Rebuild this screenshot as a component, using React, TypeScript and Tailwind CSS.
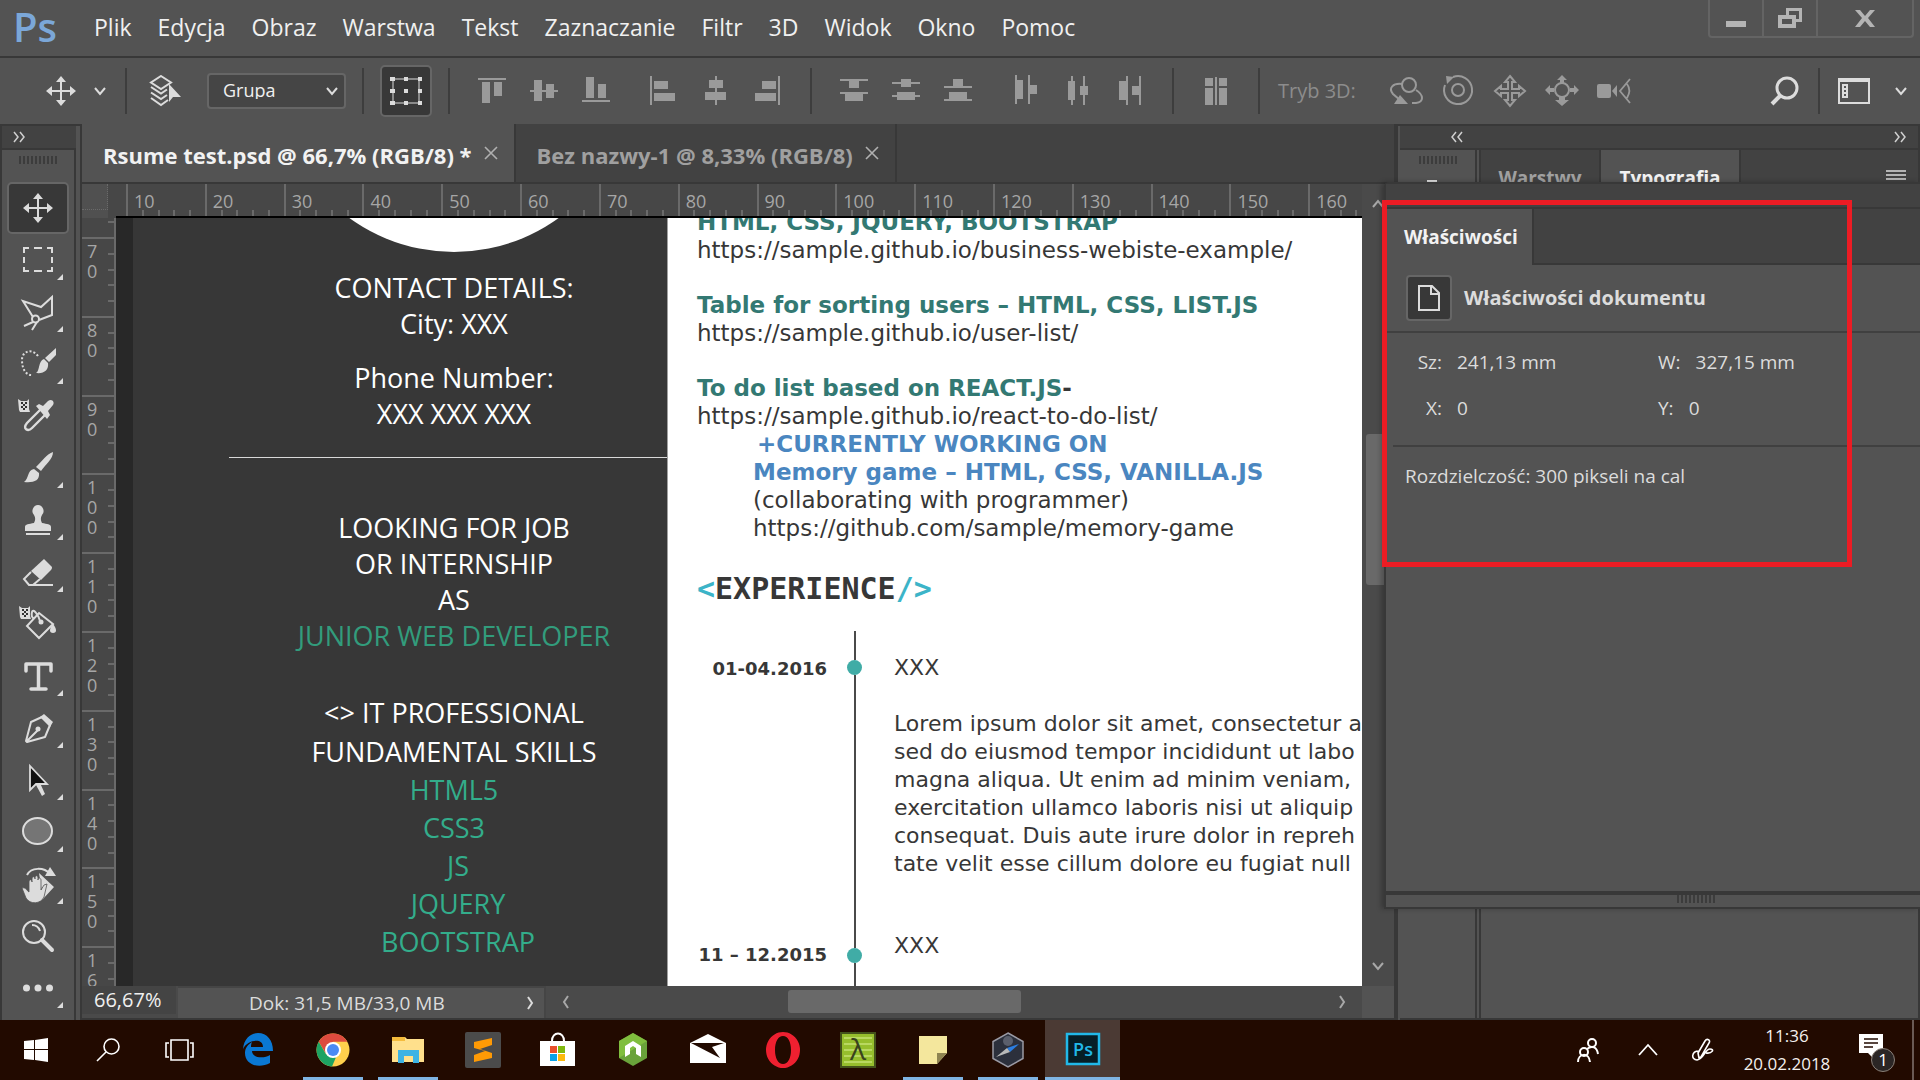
import type { ReactNode } from "react";
import clsx from "clsx";

const menuItems = ["Plik", "Edycja", "Obraz", "Warstwa", "Tekst", "Zaznaczanie", "Filtr", "3D", "Widok", "Okno", "Pomoc"];
const rulerX = [10, 20, 30, 40, 50, 60, 70, 80, 90, 100, 110, 120, 130, 140, 150, 160];
const rulerY = [70, 80, 90, 100, 110, 120, 130, 140, 150, 160];

const loremLines = [
  "Lorem ipsum dolor sit amet, consectetur a",
  "sed do eiusmod tempor incididunt ut labo",
  "magna aliqua. Ut enim ad minim veniam,",
  "exercitation ullamco laboris nisi ut aliquip",
  "consequat. Duis aute irure dolor in repreh",
  "tate velit esse cillum dolore eu fugiat null",
];

function Svg({ children, className, size = 32 }: { children: ReactNode; className?: string; size?: number }) {
  return (
    <svg width={size} height={size} viewBox={`0 0 ${size} ${size}`} className={clsx("shrink-0", className)} fill="currentColor" aria-hidden="true">
      {children}
    </svg>
  );
}

function Chevron({ d, className }: { d: "up" | "down" | "left" | "right"; className?: string }) {
  const paths = { up: "M3 11l5-6 5 6", down: "M3 5l5 6 5-6", left: "M10 2L6 8l4 6", right: "M6 2l4 6-4 6" };
  return (
    <svg width="16" height="16" viewBox="0 0 16 16" className={className} fill="none" stroke="currentColor" strokeWidth="2" aria-hidden="true">
      <path d={paths[d]} />
    </svg>
  );
}

function DoubleChevron({ left = false }: { left?: boolean }) {
  return (
    <svg width="14" height="12" viewBox="0 0 14 12" fill="none" stroke="#d0d0d0" strokeWidth="1.5" aria-hidden="true">
      <path d={left ? "M6 1L2 6l4 5M12 1L8 6l4 5" : "M2 1l4 5-4 5M8 1l4 5-4 5"} />
    </svg>
  );
}

function Grip() {
  return (
    <span className="flex h-2 w-[38px] justify-between">
      {Array.from({ length: 10 }, (_, i) => (
        <span key={i} className="w-[2px] bg-[#3c3c3c]" />
      ))}
    </span>
  );
}

function Divider() {
  return <span className="h-[46px] w-[2px] shrink-0 bg-[#3d3d3d]" />;
}

const moveIcon = (
  <path d="M16 1l5 6h-4v8h8v-4l6 5-6 5v-4h-8v8h4l-5 6-5-6h4v-8H7v4l-6-5 6-5v4h8V7h-4z" />
);

const checker = (
  <>
    <path d="M-1 1l3 2h6l2-2v10l1 3H1l-1-2z" fill="#dcdcdc" />
    <path d="M2 4h2v2H2zM6 4h2v2H6zM4 6h2v2H4zM2 8h2v2H2zM6 8h2v2H6zM4 10h2v2H4z" fill="#333" />
  </>
);

const alignGroups: { label: string; icon: ReactNode }[][] = [
  [
    { label: "Wyrównaj górne krawędzie", icon: <path d="M2 3h28v2H2zM6 7h8v21H6zM18 7h8v14h-8z" /> },
    { label: "Wyrównaj środki w pionie", icon: <path d="M2 15h28v2H2zM6 5h8v21H6zM18 9h8v14h-8z" /> },
    { label: "Wyrównaj dolne krawędzie", icon: <path d="M2 25h28v2H2zM6 2h8v21H6zM18 9h8v14h-8z" /> },
  ],
  [
    { label: "Wyrównaj lewe krawędzie", icon: <path d="M2 1h2v29H2zM6 6h14v8H6zM6 18h21v8H6z" /> },
    { label: "Wyrównaj środki w poziomie", icon: <path d="M15 1h2v29h-2zM9 5h14v8H9zM5 17h21v8H5z" /> },
    { label: "Wyrównaj prawe krawędzie", icon: <path d="M26 1h2v29h-2zM10 6h14v8H10zM3 18h21v8H3z" /> },
  ],
  [
    { label: "Rozłóż górne krawędzie", icon: <path d="M2 4h28v2H2zM11 6h10v7H11zM2 17h28v2H2zM7 19h18v7H7z" /> },
    { label: "Rozłóż środki w pionie", icon: <path d="M2 7h28v2H2zM11 4h10v8H11zM2 20h28v2H2zM7 17h18v8H7z" /> },
    { label: "Rozłóż dolne krawędzie", icon: <path d="M2 11h28v2H2zM11 4h10v7H11zM2 24h28v2H2zM7 17h18v7H7z" /> },
  ],
  [
    { label: "Rozłóż lewe krawędzie", icon: <path d="M5 0h2v29H5zM7 5h6v19H7zM18 0h2v29h-2zM20 10h7v9h-7z" /> },
    { label: "Rozłóż środki w poziomie", icon: <path d="M9 1h2v29H9zM6 6h7v19H6zM21 1h2v29h-2zM18 11h8v9h-8z" /> },
    { label: "Rozłóż prawe krawędzie", icon: <path d="M12 1h2v29h-2zM5 6h7v19H5zM25 1h2v29h-2zM18 11h7v9h-7z" /> },
  ],
];

const modes3d: { label: string; icon: ReactNode }[] = [
  {
    label: "Obrót 3D",
    icon: (
      <>
        <g fill="none" stroke="currentColor" strokeWidth="2"><circle cx="19" cy="10" r="7" /><path d="M12 9C3 8-2 13 3 19l7 6M26 15c8 5 8 12 0 13h-4" /></g>
        <path d="M10 20l8 9H4z" />
      </>
    ),
  },
  {
    label: "Obróć kamerę",
    icon: (
      <>
        <g fill="none" stroke="currentColor" strokeWidth="2"><circle cx="16" cy="15" r="6" /><path d="M11 2a14 14 0 1 1-8 8" /></g>
        <path d="M4 1l8 1-7 7z" />
      </>
    ),
  },
  {
    label: "Przeciągnij",
    icon: <path d="M16 1l5 6h-3v7h7v-3l6 5-6 5v-3h-7v7h3l-5 6-5-6h3v-7H7v3l-6-5 6-5v3h7V7h-3z" fill="none" stroke="currentColor" strokeWidth="2" />,
  },
  {
    label: "Przesuń",
    icon: (
      <>
        <circle cx="16" cy="15" r="7" fill="none" stroke="currentColor" strokeWidth="2" />
        <path d="M16 0l5 5h-3v3h-4V5h-3zM16 31l-7-6h4v-3h6v3h4zM-1 15l5-5v3h4v4H4v3zM33 15l-5-5v3h-4v4h4v3z" />
      </>
    ),
  },
  {
    label: "Powiększ kamerę",
    icon: (
      <>
        <rect x="-1" y="9" width="14" height="14" rx="2" />
        <path d="M14 16l5-6v12z" />
        <path d="M32 4L22 16l10 12M29 9c3 4 3 9 0 14" fill="none" stroke="currentColor" strokeWidth="1.8" />
      </>
    ),
  },
];

const tools: { label: string; icon: ReactNode; more?: boolean; active?: boolean }[] = [
  { label: "Przesunięcie", active: true, icon: moveIcon },
  { label: "Zaznaczanie prostokątne", more: true, icon: <path d="M1 3h6v2H3v4H1zM12 3h8v2h-8zM25 3h6v6h-2V5h-4zM1 13h2v6H1zM29 13h2v6h-2zM1 23h2v3h4v2H1zM12 26h8v2h-8zM29 23h2v5h-6v-2h4z" /> },
  {
    label: "Lasso wielokątne",
    more: true,
    icon: (
      <g fill="none" stroke="currentColor" strokeWidth="2"><path d="M11 21L1 5l18 6L30 1v18l-13 5M11 26l-9 4M15 26l-5 8" /><circle cx="13.5" cy="23" r="3.5" /></g>
    ),
  },
  {
    label: "Szybkie zaznaczanie",
    more: true,
    icon: (
      <>
        <path d="M16 8C10 0 0 3 0 12s4 16 11 15" fill="none" stroke="currentColor" strokeWidth="2" strokeDasharray="2 2" />
        <path d="M34 0v7l-7 7-4-4zM22 11l4 4c1 7-4 11-12 10 4-2 2-12 8-14z" />
      </>
    ),
  },
  {
    label: "Kroplomierz",
    icon: (
      <>
        <g transform="translate(-3 -2)">{checker}</g>
        <path d="M19 9L5 23c-5 6 1 9 5 5l14-14" fill="none" stroke="currentColor" strokeWidth="2.4" />
        <path d="M14 6l3-2 4 2 5-5c4-3 7 1 5 4l-5 6 2 4-3 4z" />
      </>
    ),
  },
  { label: "Pędzel", more: true, icon: <path d="M31 0c0 7-7 12-12 19l-5-4C20 9 25 2 31 0zM12 17l5 4c1 8-6 10-15 9 5-3 3-12 10-13z" /> },
  { label: "Stempel", more: true, icon: <path d="M16 1a6 6 0 0 1 4 10c-2 3-1 6 0 8 5 1 9 1 9 4v4H3v-4c0-3 4-3 9-4 1-2 2-5 0-8a6 6 0 0 1 4-10zM4 29h24v2H4z" /> },
  {
    label: "Gumka",
    more: true,
    icon: (
      <>
        <path d="M22 3l8 8c0 2-1 3-2 4l-9 9-10-9z" />
        <path d="M9 16l-7 7 5 6h4l7-6M7 29h24" fill="none" stroke="currentColor" strokeWidth="2" />
      </>
    ),
  },
  {
    label: "Wiadro z farbą",
    icon: (
      <>
        <g transform="translate(-2 -3)">{checker}</g>
        <path d="M17 5l14 11-14 14L5 18zM18 13c-2-7-7-13-8-9s0 5 2 7" fill="none" stroke="currentColor" strokeWidth="2" />
        <circle cx="19" cy="14" r="2.5" />
        <path d="M31 16c4 5 4 9 0 9s-4-4 0-9z" />
      </>
    ),
  },
  { label: "Tekst poziomy", more: true, icon: <path d="M4 11V4h25v7M16.5 4v25M9 29h15" fill="none" stroke="currentColor" strokeWidth="3.5" strokeLinecap="round" strokeLinejoin="round" /> },
  {
    label: "Pióro",
    more: true,
    icon: (
      <>
        <path d="M20 5L9 10 4 29l1 1 18-5 5-12zM5 29l11-11" fill="none" stroke="currentColor" strokeWidth="2" strokeLinejoin="round" />
        <circle cx="16" cy="17" r="2.5" />
        <path d="M22 2l9 8-3 5L18 5z" />
      </>
    ),
  },
  {
    label: "Zaznaczanie ścieżek",
    more: true,
    icon: (
      <>
        <path d="M8 2v24l6-6h11z" fill="#111" stroke="currentColor" strokeWidth="1.8" />
        <path d="M14 21l4-2 5 11-3 2z" />
      </>
    ),
  },
  { label: "Elipsa", more: true, icon: <ellipse cx="15.5" cy="15" rx="14.5" ry="13" fill="#757575" stroke="currentColor" strokeWidth="2" /> },
  {
    label: "Obracanie widoku",
    more: true,
    icon: (
      <>
        <path d="M5 7c4-8 17-8 23-1" fill="none" stroke="currentColor" strokeWidth="2" />
        <path d="M28-1l6 9H23zM17 5l15 14-11 12z" />
        <path d="M0 20c4-1 5 3 7 4V14c0-3 3-3 3 0v-3c0-3 3-3 3 0v-1c0-3 3-3 3 0v2c0-3 3-2 3 0v10l3-5 3-1-3 13c-3 7-14 8-18 1z" stroke="#535353" strokeWidth=".8" />
      </>
    ),
  },
  {
    label: "Powiększenie",
    icon: (
      <>
        <g fill="none" stroke="currentColor" strokeWidth="2"><circle cx="12" cy="12" r="11" /><path d="M10 5c5 0 7 3 8 6" /></g>
        <path d="M20 20l10 10" stroke="currentColor" strokeWidth="4" strokeLinecap="round" />
      </>
    ),
  },
  { label: "Edytuj pasek narzędzi", more: true, icon: <><circle cx="4.5" cy="16" r="3.5" /><circle cx="16" cy="16" r="3.5" /><circle cx="27.5" cy="16" r="3.5" /></> },
];

function TopMenu() {
  return (
    <header className="flex h-[58px] shrink-0 items-start border-b-2 border-[#383838]">
      <span className="w-20 pl-[13px] text-[40px] leading-[54px] font-semibold text-[#7ba7d8]">Ps</span>
      <nav className="flex gap-[26px] pl-[14px] text-[23px] leading-[54px] text-[#f0f0f0]">
        {menuItems.map((item) => (
          <button key={item} type="button">{item}</button>
        ))}
      </nav>
      <div className="mr-[6px] ml-auto flex h-[38px] rounded-b border-2 border-t-0 border-[#646464] text-[#b4b4b4]">
        <button type="button" aria-label="Minimalizuj" className="flex w-[54px] items-center justify-center border-r-2 border-[#646464]">
          <span className="mt-[12px] h-[6px] w-5 bg-current" />
        </button>
        <button type="button" aria-label="Przywróć" className="flex w-[54px] items-center justify-center border-r-2 border-[#646464]">
          <Svg size={24}><path d="M8 2h16v14h-6v6H0V9h8zM11 5v4h7v4h3V5zM4 13v5h10v-5z" fillRule="evenodd" /></Svg>
        </button>
        <button type="button" aria-label="Zamknij" className="flex w-[94px] items-center justify-center">
          <Svg size={20}><path d="M0 2h5l5 6 5-6h5l-7 8 7 9h-5l-5-6-5 6H0l7-9z" /></Svg>
        </button>
      </div>
    </header>
  );
}

function IconGroup({ items }: { items: { label: string; icon: ReactNode }[] }) {
  return (
    <div className="flex text-[#9a9a9a]">
      {items.map((item) => (
        <button key={item.label} type="button" aria-label={item.label} className="flex w-[52px] justify-center">
          <Svg className="overflow-visible">{item.icon}</Svg>
        </button>
      ))}
    </div>
  );
}

function OptionsBar() {
  return (
    <div className="flex h-[66px] shrink-0 items-center gap-4 pr-[6px] pl-[35px] text-[#dcdcdc]">
      <div className="flex items-center">
        <button type="button" aria-label="Narzędzie Przesunięcie" className="flex w-[52px] justify-center"><Svg>{moveIcon}</Svg></button>
        <button type="button" aria-label="Ustawienia narzędzia" className="flex w-[26px] justify-center"><Chevron d="down" /></button>
        <span className="w-3" />
        <Divider />
        <button type="button" aria-label="Automatyczne zaznaczanie" className="ml-3 flex w-[52px] justify-center">
          <Svg>
            <path d="M12 1l10 6.5-10 6.5L2 7.500zM2 12l10 6.500 6-4M2 17.500L12 24l6-4M2 23l10 7 7-5" fill="none" stroke="currentColor" strokeWidth="2" />
            <path d="M20 9v18l4-5h8z" />
          </Svg>
        </button>
      </div>
      <div className="relative shrink-0">
        <select aria-label="Zaznacz" className="h-9 w-[139px] appearance-none rounded-[4px] border-2 border-[#666] bg-[#454545] pb-[2px] pl-[14px] text-[18px] leading-none text-[#f0f0f0]">
          <option>Grupa</option>
        </select>
        <Chevron d="down" className="pointer-events-none absolute top-[10px] right-[6px]" />
      </div>
      <Divider />
      <button type="button" aria-label="Pokaż elementy przekształcenia" className="flex h-[52px] w-[52px] items-center justify-center rounded-[5px] border-2 border-[#666] bg-[#383838]">
        <Svg>
          <path d="M3 4h26v24H3z" fill="none" stroke="#8a8a8a" strokeWidth="2" />
          <path d="M0 2h5v4H0zM14 2h4v4h-4zM28 2h4v4h-4zM0 14h5v4H0zM14 14h4v4h-4zM28 14h4v4h-4zM0 26h5v4H0zM14 26h4v4h-4zM28 26h4v4h-4z" />
        </Svg>
      </button>
      <Divider />
      {alignGroups.slice(0, 2).map((group, i) => <IconGroup key={i} items={group} />)}
      <Divider />
      {alignGroups.slice(2).map((group, i) => <IconGroup key={i} items={group} />)}
      <Divider />
      <IconGroup items={[{ label: "Automatyczne wyrównywanie", icon: <path d="M5 3h8v8H5zM5 13h8v17H5zM15 2h2v28h-2zM19 3h8v8h-8zM19 13h8v17h-8z" /> }]} />
      <Divider />
      <span className="ml-[2px] text-[20px] whitespace-nowrap text-[#8c8c8c]">Tryb 3D:</span>
      <div className="ml-2"><IconGroup items={modes3d} /></div>
      <div className="ml-auto flex items-center gap-2">
        <button type="button" aria-label="Szukaj" className="flex w-[52px] justify-center">
          <Svg><circle cx="19" cy="13" r="10" fill="none" stroke="currentColor" strokeWidth="3" /><path d="M12 21l-8 8" stroke="currentColor" strokeWidth="4" /></Svg>
        </button>
        <Divider />
        <button type="button" aria-label="Obszar roboczy" className="flex w-[52px] justify-center">
          <Svg><path d="M0 3h32v26H0zM2 7v20h28V7zM4 9h6v14H4zM6 11v2h2v-2zM6 15v2h2v-2zM6 19v2h2v-2z" fillRule="evenodd" /></Svg>
        </button>
        <button type="button" aria-label="Wybierz obszar roboczy" className="flex w-[26px] justify-center"><Chevron d="down" /></button>
      </div>
    </div>
  );
}

function Toolbox() {
  return (
    <aside className="flex w-[82px] shrink-0 flex-col border-x-2 border-t-2 border-[#383838] pr-[4px]">
      <div className="flex h-6 items-center border-b-2 border-[#383838] bg-[#424242] pl-[10px]"><DoubleChevron /></div>
      <div className="flex h-[32px] items-start justify-center border-r-2 border-[#383838] pt-[6px]"><Grip /></div>
      <div className="flex flex-1 flex-col items-center border-r-2 border-[#383838]">
        {tools.map((tool) => (
          <button
            key={tool.label}
            type="button"
            aria-label={tool.label}
            className={clsx(
              "relative flex h-[52px] w-[62px] shrink-0 items-center justify-center rounded-[5px] border-2 text-[#dcdcdc]",
              tool.active ? "border-[#666] bg-[#383838]" : "border-transparent",
            )}
          >
            <Svg className="overflow-visible">{tool.icon}</Svg>
            {tool.more && (
              <svg width="6" height="6" viewBox="0 0 6 6" className="absolute right-1 bottom-1" aria-hidden="true"><path d="M6 0v6H0z" fill="#dcdcdc" /></svg>
            )}
          </button>
        ))}
      </div>
    </aside>
  );
}

function DocumentTab({ title, active = false }: { title: string; active?: boolean }) {
  return (
    <div className={clsx("flex items-center gap-3 border-r-2 border-[#383838] pr-4 pl-[21px]", active ? "bg-[#535353] text-[#f2f2f2]" : "text-[#a0a0a0]")}>
      <button type="button" className="pt-1 text-[22px] font-bold whitespace-nowrap">{title}</button>
      <button type="button" aria-label={`Zamknij ${title}`}>
        <svg width="14" height="14" viewBox="0 0 14 14" stroke="#b0b0b0" strokeWidth="1.6" aria-hidden="true"><path d="M1 1l12 12M13 1L1 13" /></svg>
      </button>
    </div>
  );
}

function HorizontalRuler() {
  return (
    <div className="flex-1 overflow-hidden border-b-2 border-black bg-[#474747] pl-[10px]">
      <div className="flex w-[1261px] text-[18px] text-[#a6a6a6]">
        {rulerX.map((n) => (
          <div key={n} className="flex-1 border-l-2 border-[#6a6a6a]">
            <div className="h-[26px] pt-2 pl-[6px] leading-[18px]">{n}</div>
            <div className="flex h-[6px]">
              {[0, 1, 2, 3, 4].map((t) => (
                <span key={t} className={clsx("flex-1", t > 0 && "border-l-2 border-[#6a6a6a]")} />
              ))}
            </div>
          </div>
        ))}
      </div>
    </div>
  );
}

function VerticalRuler() {
  return (
    <div className="flex w-[34px] shrink-0 flex-col overflow-hidden border-r-2 border-[#6a6a6a] bg-[#474747]">
      <div className="flex h-[19px] shrink-0 justify-end pt-[3px]"><span className="h-[2px] w-[6px] bg-[#6a6a6a]" /></div>
      <div className="flex h-[788px] shrink-0 flex-col text-[18px] leading-[20px] text-[#a6a6a6]">
        {rulerY.map((n) => (
          <div key={n} className="flex min-h-0 flex-1 justify-between border-t-2 border-[#6a6a6a]">
            <div className="flex flex-col pt-[2px] pl-[5px]">
              {String(n).split("").map((digit, i) => <span key={i}>{digit}</span>)}
            </div>
            <div className="flex w-[6px] flex-col">
              {[0, 1, 2, 3, 4].map((t) => (
                <span key={t} className={clsx("flex-1", t > 0 && "border-t-2 border-[#6a6a6a]")} />
              ))}
            </div>
          </div>
        ))}
      </div>
    </div>
  );
}

function ResumeSidebar() {
  return (
    <div className="w-[534px] shrink-0 bg-[#373737] text-center text-[27px] leading-9 text-white">
      <div className="ml-[108px] flex justify-center">
        <div className="-mt-[322px] size-[356px] shrink-0 rounded-full bg-white" />
      </div>
      <div className="pt-[18px] pl-[108px]">
        <p>CONTACT DETAILS:</p>
        <p>City: XXX</p>
        <p className="mt-[18px]">Phone Number:</p>
        <p>XXX XXX XXX</p>
      </div>
      <hr className="mt-[25px] ml-24 border-[#d8d8d8]" />
      <div className="pt-[52px] pl-[108px]">
        <p>LOOKING FOR JOB</p>
        <p>OR INTERNSHIP</p>
        <p>AS</p>
        <p className="text-[#329c7c]">JUNIOR WEB DEVELOPER</p>
      </div>
      <div className="pt-[39px] pl-[108px] leading-[39px]">
        <p>&lt;&gt; IT PROFESSIONAL</p>
        <p>FUNDAMENTAL SKILLS</p>
        <ul className="leading-[38px] text-[#33ad8b]">
          <li>HTML5</li>
          <li>CSS3</li>
          <li className="pl-2">JS</li>
          <li className="pl-2">JQUERY</li>
          <li className="pl-2">BOOTSTRAP</li>
        </ul>
      </div>
    </div>
  );
}

function ResumeMain() {
  return (
    <div className="min-w-0 flex-1 overflow-hidden border-l border-[#a0a0a0] bg-white pl-[29px] font-['DejaVu_Sans',sans-serif] text-[23px] leading-7 whitespace-nowrap text-[#373737]">
      <div className="-mt-[10px] font-bold text-[#337973]">HTML, CSS, JQUERY, BOOTSTRAP</div>
      <div>https://sample.github.io/business-webiste-example/</div>
      <div className="mt-[27px] font-bold text-[#337973]">Table for sorting users – HTML, CSS, LIST.JS</div>
      <div>https://sample.github.io/user-list/</div>
      <div className="mt-[27px] font-bold text-[#337973]">To do list based on REACT.JS<span className="text-[#373737]">-</span></div>
      <div>https://sample.github.io/react-to-do-list/</div>
      <div className="pl-[56px]">
        <div className="pl-1 font-bold text-[#4a86c0]">+CURRENTLY WORKING ON</div>
        <div className="font-bold text-[#4a86c0]">Memory game – HTML, CSS, VANILLA.JS</div>
        <div>(collaborating with programmer)</div>
        <div>https://github.com/sample/memory-game</div>
      </div>
      <h2 className="mt-[30px] font-['DejaVu_Sans_Mono',monospace] text-[30px] leading-[34px] font-bold">
        <span className="text-[#3cb4c8]">&lt;</span>EXPERIENCE<span className="text-[#3cb4c8]">/&gt;</span>
      </h2>
      <div className="mt-[25px] flex text-[22px]">
        <div className="w-[130px] text-right text-[18px] font-bold">
          <div className="pt-6">01-04.2016</div>
          <div className="pt-[258px]">11 – 12.2015</div>
        </div>
        <div className="ml-5 flex w-[15px] flex-col items-center">
          <span className="h-[29px] w-[2px] bg-[#4a4a4a]" />
          <span className="size-[15px] rounded-full bg-[#40aca6]" />
          <span className="h-[273px] w-[2px] bg-[#4a4a4a]" />
          <span className="size-[15px] rounded-full bg-[#40aca6]" />
          <span className="h-[40px] w-[2px] bg-[#4a4a4a]" />
        </div>
        <div className="ml-[32px] pt-[23px]">
          <div>XXX</div>
          <div className="pt-7">
            {loremLines.map((line) => <div key={line}>{line}</div>)}
          </div>
          <div className="pt-[54px]">XXX</div>
        </div>
      </div>
    </div>
  );
}

function DocumentWindow() {
  return (
    <main className="flex min-w-0 flex-1 flex-col border-r-2 border-[#383838]">
      <div className="flex h-[60px] shrink-0 border-b-2 border-[#383838] bg-[#424242]">
        <DocumentTab title="Rsume test.psd @ 66,7% (RGB/8) *" active />
        <DocumentTab title="Bez nazwy-1 @ 8,33% (RGB/8)" />
      </div>
      <div className="flex min-h-0 flex-1">
        <div className="flex min-w-0 flex-1 flex-col">
          <div className="flex h-[34px] shrink-0">
            <div className="flex w-[34px] flex-col border-r-8 border-[#474747] bg-[#505050] pb-2">
              <span className="flex-1 border-r border-b border-dotted border-[#6a6a6a]" />
            </div>
            <HorizontalRuler />
          </div>
          <div className="flex min-h-0 flex-1">
            <VerticalRuler />
            <div className="flex min-w-0 flex-1 overflow-hidden bg-[#282828] pl-[17px]">
              <ResumeSidebar />
              <ResumeMain />
            </div>
          </div>
        </div>
        <div className="flex w-8 shrink-0 flex-col bg-[#4a4a4a] text-[#a8a8a8]">
          <button type="button" aria-label="Przewiń w górę" className="flex h-10 items-center justify-center"><Chevron d="up" /></button>
          <div className="flex-1 pl-1"><div className="mt-[210px] h-[151px] w-6 rounded-[3px] bg-[#696969]" /></div>
          <button type="button" aria-label="Przewiń w dół" className="flex h-10 items-center justify-center"><Chevron d="down" /></button>
        </div>
      </div>
      <div className="flex h-[34px] shrink-0 border-b-2 border-[#383838] text-[#dcdcdc]">
        <input aria-label="Powiększenie" defaultValue="66,67%" className="w-[96px] border-r-2 border-b-4 border-[#4a4a4a] bg-[#444] pl-[12px] text-[20px] text-[#f0f0f0]" />
        <div className="flex w-[368px] items-center justify-between border-t-2 border-r-2 border-[#454545] pr-[6px] pl-[71px] text-[19px]">
          <span>Dok: 31,5 MB/33,0 MB</span>
          <button type="button" aria-label="Informacje o dokumencie"><Chevron d="right" /></button>
        </div>
        <div className="flex flex-1 bg-[#4a4a4a] text-[#a8a8a8]">
          <button type="button" aria-label="Przewiń w lewo" className="flex w-10 items-center justify-center"><Chevron d="left" /></button>
          <div className="flex-1 pt-1"><div className="ml-[202px] h-[23px] w-[233px] rounded-[3px] bg-[#696969]" /></div>
          <button type="button" aria-label="Przewiń w prawo" className="flex w-10 items-center justify-center"><Chevron d="right" /></button>
        </div>
        <div className="w-8" />
      </div>
    </main>
  );
}

function Docks() {
  return (
    <aside className="flex w-[524px] shrink-0 flex-col border-x-2 border-t-2 border-[#383838] bg-[#535353] pl-[2px]">
      <div className="flex h-6 shrink-0 items-center justify-between border-b-2 border-[#383838] bg-[#424242] pr-[11px] pl-[50px]">
        <DoubleChevron left />
        <DoubleChevron />
      </div>
      <div className="flex flex-1 border-b-2 border-[#383838]">
        <div className="flex w-[77px] flex-col items-center border-r-2 border-[#383838] pt-[6px]">
          <Grip />
          <span className="mt-4 mr-3 h-1 w-[10px] bg-[#dcdcdc]" />
        </div>
        <div className="ml-[2px] flex-1 border-l-2 border-[#383838]">
          <div className="flex h-14 bg-[#424242] text-[19px] font-bold">
            <button type="button" className="w-[120px] border-r-2 border-[#383838] text-[#a0a0a0]">Warstwy</button>
            <button type="button" className="w-[140px] border-r-2 border-[#383838] bg-[#535353] text-[#f2f2f2]">Typografia</button>
            <button type="button" aria-label="Menu panelu" className="mt-5 mr-3 ml-auto flex h-[10px] w-5 flex-col justify-between">
              <span className="h-[2px] w-full bg-[#b4b4b4]" />
              <span className="h-[2px] w-full bg-[#b4b4b4]" />
              <span className="h-[2px] w-full bg-[#b4b4b4]" />
            </button>
          </div>
        </div>
      </div>
    </aside>
  );
}

function PropertiesPanel() {
  return (
    <section className="absolute top-[58px] right-0 flex h-[727px] w-[536px] flex-col rounded-tl-[5px] border-y-2 border-l-2 border-[#383838] bg-[#535353] text-[19px] leading-6 text-[#dcdcdc] shadow-[-3px_0_5px_rgba(0,0,0,0.25)]">
      <div className="h-[25px] border-b-2 border-[#383838] bg-[#424242]" />
      <div className="flex h-14 bg-[#424242]">
        <button type="button" className="border-r-2 border-[#383838] bg-[#535353] pr-[14px] pl-[18px] font-bold text-[#f2f2f2]">Właściwości</button>
        <div className="flex-1 border-b-2 border-[#383838]" />
      </div>
      <div className="flex h-[68px] items-center gap-3 border-b-2 border-[#404040] pl-5">
        <span className="flex size-[46px] items-center justify-center rounded-[4px] border-2 border-[#666] bg-[#383838]">
          <Svg size={28}><path d="M4 2h13l7 7v17H4zM16 2v8h8" fill="none" stroke="currentColor" strokeWidth="2" /></Svg>
        </span>
        <h2 className="text-[20px] font-bold">Właściwości dokumentu</h2>
      </div>
      <dl className="grid grid-cols-[56px_200px_1fr] gap-y-[22px] pt-[17px] pb-[25px]">
        <dt className="text-right">Sz:</dt>
        <dd className="pl-[15px]">241,13 mm</dd>
        <div className="flex gap-[15px] pl-4"><dt>W:</dt><dd>327,15 mm</dd></div>
        <dt className="text-right">X:</dt>
        <dd className="pl-[15px]">0</dd>
        <div className="flex gap-[15px] pl-4"><dt>Y:</dt><dd>0</dd></div>
      </dl>
      <hr className="ml-[7px] border-t-2 border-[#404040]" />
      <p className="flex-1 pt-[17px] pl-[19px]">Rozdzielczość: 300 pikseli na cal</p>
      <div className="flex h-4 justify-center border-t-4 border-[#383838] pl-[86px]"><Grip /></div>
      {/* highlight around the document properties */}
      <div className="pointer-events-none absolute top-4 -left-1 h-[367px] w-[470px] border-[5px] border-[#ec1c24]" />
    </section>
  );
}

const taskbarApps: { name: string; icon: ReactNode; running?: boolean; active?: boolean }[] = [
  {
    name: "Edge",
    icon: <path d="M3 17C4 6 11 1 18 1c9 0 15 7 15 18H12c0 7 12 8 18 4v8C19 37 5 33 5 21c0-6 4-9 7-11-1 2-1 4-1 5h12c0-10-16-7-20 2z" fill="#0a78d4" />,
  },
  {
    name: "Chrome",
    running: true,
    icon: (
      <>
        <circle cx="18" cy="18" r="16.5" fill="#ffd04c" />
        <path d="M3.7 9.8A16.5 16.5 0 0 1 32.3 9.8H18l-7 12z" fill="#dd4b3e" />
        <path d="M3.7 9.8l7.2 12.3 10 3.5L17 34.5A16.5 16.5 0 0 1 3.7 9.8z" fill="#1da362" />
        <circle cx="18" cy="18" r="8" fill="#fff" /><circle cx="18" cy="18" r="6" fill="#4a8af4" />
      </>
    ),
  },
  {
    name: "Eksplorator plików",
    running: true,
    icon: (
      <>
        <path d="M2 5h13l2 2h17v23H2z" fill="#ffe08c" /><path d="M2 5h13v4H2z" fill="#f5bc3c" />
        <path d="M8 18h21v13h-6v-7h-9v7H8z" fill="#3db3e4" />
      </>
    ),
  },
  { name: "Sublime Text", icon: <><rect width="36" height="36" rx="2" fill="#4b4b4b" /><path d="M27 6v7l-12 4 12 4v5L9 30v-7l11-4-11-3v-6z" fill="#ff9a05" /></> },
  {
    name: "Sklep",
    icon: (
      <>
        <path d="M0 9h35v25H0z" fill="#fff" /><path d="M12 9c0-10 12-10 12 0" fill="none" stroke="#fff" strokeWidth="2" />
        <path d="M10 14h7v7h-7z" fill="#e8502c" /><path d="M18 14h7v7h-7z" fill="#7fb80e" /><path d="M10 22h7v7h-7z" fill="#08a2e8" /><path d="M18 22h7v7h-7z" fill="#fcb80c" />
      </>
    ),
  },
  { name: "Node.js", icon: <><path d="M18 1l14 8v17l-14 8-14-8V9z" fill="#6aa33a" /><path d="M18 1l14 8L4 26V9z" fill="#86c440" opacity=".8" /><path d="M10 25V14l8-5 8 5v11l-5-3v-6l-3-2-3 2v6z" fill="#fff" /></> },
  { name: "Poczta", icon: <path d="M0 11L18 2l18 9v20H0zM1 11l29 15-8-11 12-4z" fill="#fff" fillRule="evenodd" /> },
  { name: "Opera", icon: <path d="M18 0a17 18 0 1 0 .01 0zM18 4c5 0 8 6 8 14s-3 14-8 14-8-6-8-14 3-14 8-14z" fill="#ee2030" fillRule="evenodd" /> },
  {
    name: "Edytor Lambda",
    icon: (
      <>
        <rect x="1" y="1" width="34" height="34" fill="#96be2d" stroke="#43521a" strokeWidth="2" />
        <path d="M4 6h28M4 12h28M4 18h28M4 24h28M4 30h28" stroke="#b8d860" strokeWidth="2" />
        <text x="18" y="28" textAnchor="middle" fontSize="30" fontFamily="Open Sans" fill="#39421e">λ</text>
      </>
    ),
  },
  { name: "Notatki", running: true, icon: <><path d="M4 4h28v17L22 32H4z" fill="#f4e79d" /><path d="M32 21L22 32V21z" fill="#8f8451" /></> },
  {
    name: "Przeglądarka",
    running: true,
    icon: (
      <>
        <path d="M18 1l15 8.500v17L18 35 3 26.500v-17z" fill="#2c303c" stroke="#9a9aa4" strokeWidth="1.5" />
        <circle cx="18" cy="9" r="5" fill="#5b5f6c" />
        <path d="M29 12l-9 8-3-4z" fill="#2b7de0" /><path d="M6 25l11-9 3 4z" fill="#b8b8b8" />
      </>
    ),
  },
  {
    name: "Photoshop",
    running: true,
    active: true,
    icon: (
      <>
        <rect x="2" y="2" width="32" height="30" fill="#061e26" stroke="#21b8e8" strokeWidth="2.5" />
        <text x="18" y="24" textAnchor="middle" fontSize="18" fontFamily="Open Sans" fontWeight="600" fill="#21b8e8">Ps</text>
      </>
    ),
  },
];

function Taskbar() {
  return (
    <footer className="flex h-[60px] shrink-0 bg-[#220a00] text-white">
      <button type="button" aria-label="Start" className="flex w-[72px] items-center justify-center">
        <Svg size={24}><path d="M0 3l10-1v9H0zM11 2l13-2v11H11zM0 12h10v10L0 21zM11 12h13v12l-13-2z" /></Svg>
      </button>
      <button type="button" aria-label="Wyszukaj" className="flex w-[72px] items-center justify-center">
        <Svg size={24}><g fill="none" stroke="currentColor" strokeWidth="1.6"><circle cx="15.5" cy="8.5" r="7.5" /><path d="M10 14L1 23" /></g></Svg>
      </button>
      <button type="button" aria-label="Widok zadań" className="flex w-[72px] items-center justify-center">
        <Svg><path d="M7 6h17v20H7zM5 9H2v14h3M26 9h3v14h-3" fill="none" stroke="currentColor" strokeWidth="1.6" /></Svg>
      </button>
      <div className="flex pl-1">
        {taskbarApps.map((app) => (
          <button key={app.name} type="button" aria-label={app.name} className={clsx("flex w-[75px] flex-col items-center justify-between pt-3", app.active && "bg-[#4b3a34]")}>
            <Svg size={36}>{app.icon}</Svg>
            {app.running && <span className={clsx("h-[3px] bg-[#7fb4e3]", app.active ? "w-full" : "w-[60px]")} />}
          </button>
        ))}
      </div>
      <div className="ml-auto flex items-center">
        <button type="button" aria-label="Kontakty" className="flex w-[60px] justify-center">
          <Svg size={24}><g fill="none" stroke="currentColor" strokeWidth="2"><circle cx="16" cy="5" r="4" /><path d="M11 11c5-4 10-2 11 5M2 24c0-9 11-10 12 0" /><circle cx="8" cy="14" r="4" /></g></Svg>
        </button>
        <button type="button" aria-label="Ukryte ikony" className="flex w-[60px] justify-center">
          <Svg size={20}><path d="M1 15l9-10 9 10" fill="none" stroke="currentColor" strokeWidth="1.8" /></Svg>
        </button>
        <button type="button" aria-label="Windows Ink" className="flex w-[50px] justify-center">
          <Svg size={24}><path d="M8 13c-8 0-8 9-2 9 7-1 8-11 13-11 5 0 2 5-4 4M8 20l-1-5 7-12c2-3 6-1 4 2l-8 14z" fill="none" stroke="currentColor" strokeWidth="1.6" /></Svg>
        </button>
        <div className="w-[118px] text-center text-[17px] leading-7 text-[#f4f0ee]">
          <div>11:36</div>
          <div>20.02.2018</div>
        </div>
        <button type="button" aria-label="Powiadomienia" className="relative ml-[13px] flex w-[36px]">
          <Svg size={36}><path d="M0 2h24v19H15v6l-6-6H0z" fill="#fff" /><path d="M5 7h14M5 11h14M5 15h9" stroke="#220a00" strokeWidth="1.6" /></Svg>
          <span className="absolute right-0 -bottom-1 flex size-6 items-center justify-center rounded-full border border-[#8a8078] bg-[#2b2625] text-[17px]">1</span>
        </button>
        <span className="mr-[6px] ml-[17px] h-[60px] w-[2px] bg-[#6a5a54]" />
      </div>
    </footer>
  );
}

export default function App() {
  return (
    <div className="flex h-screen flex-col overflow-hidden bg-[#535353] font-['Open_Sans','Noto_Sans',sans-serif]">
      <TopMenu />
      <OptionsBar />
      <div className="relative flex min-h-0 flex-1">
        <Toolbox />
        <DocumentWindow />
        <Docks />
        <PropertiesPanel />
      </div>
      <Taskbar />
    </div>
  );
}
